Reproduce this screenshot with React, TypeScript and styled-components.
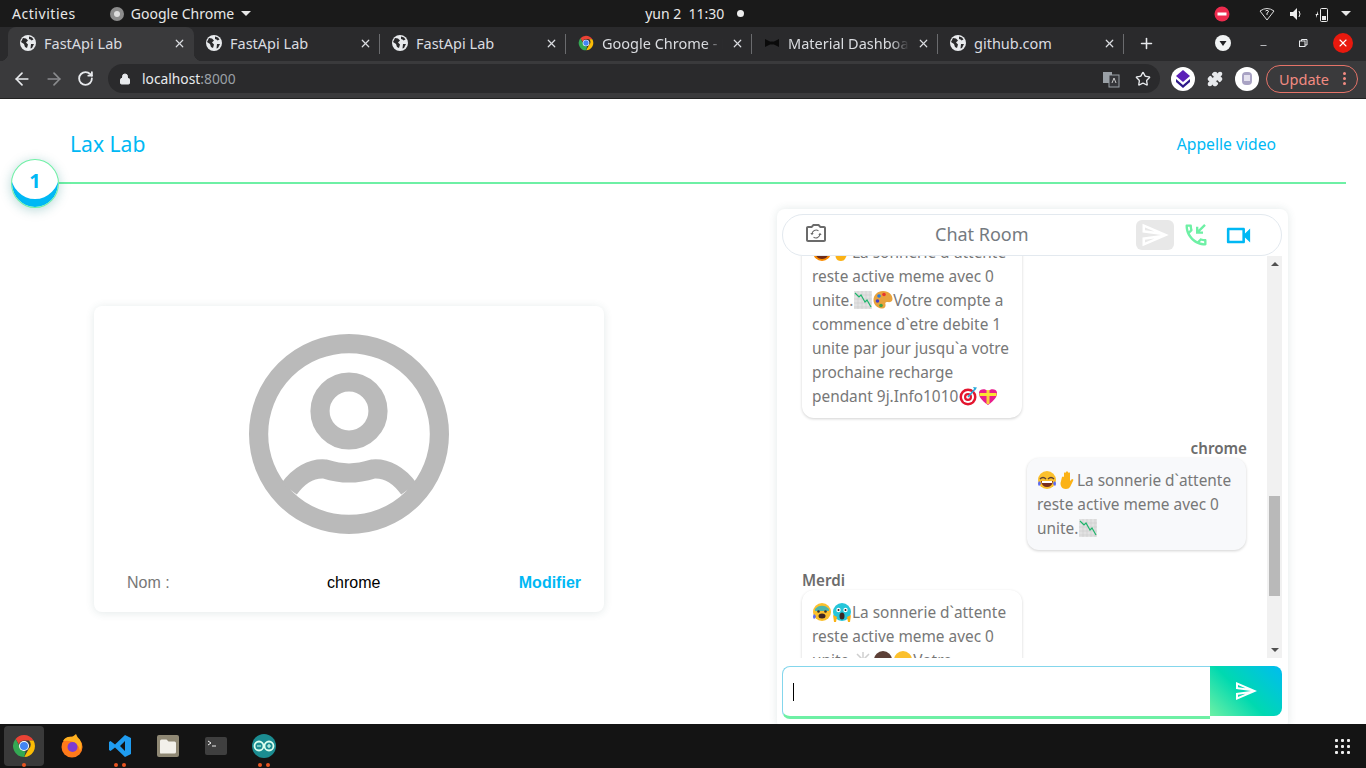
import React from "react";
import styled, { createGlobalStyle } from "styled-components";
import { ArrowLeft, ArrowRight, RotateCw, Lock, Star, Puzzle, X, Plus, Minus } from "lucide-react";

const Global = createGlobalStyle`
  html, body { margin: 0; padding: 0; background: #fff; overflow: hidden; }
  * { box-sizing: border-box; }
`;
const UI = `"Noto Sans", "DejaVu Sans", sans-serif`;
const STRIP = "#2a2a2c";
const RAISED = "#3a3a3c";

const Shell = styled.div`
  width: 1366px; height: 768px; display: flex; flex-direction: column; overflow: hidden; font-family: ${UI};
`;
const TopBar = styled.div`
  height: 27px; background: #1a1a1a; color: #e8e8e8; font-size: 14px; display: flex; align-items: center; flex: none; padding-left: 12px;
`;
const Activities = styled.span`letter-spacing: .55px;`;
const AppMenu = styled.div`display: flex; align-items: center; gap: 7px; margin-left: 34px;`;
const Caret = styled.span`width: 0; height: 0; border-left: 5px solid transparent; border-right: 5px solid transparent; border-top: 5px solid #e8e8e8; display: inline-block;`;
const Clock = styled.div`display: flex; align-items: center; gap: 13px; margin-left: 394px;`;
const ClockDot = styled.span`width: 7px; height: 7px; border-radius: 50%; background: #eee;`;
const Tray = styled.div`margin-left: auto; display: flex; align-items: center; padding-right: 15px; gap: 11px;`;
const TraySpacer = styled.span`width: 7px;`;
const WifiIcon = styled.svg`margin-right: 3px;`;
const TabStrip = styled.div`
  height: 34px; background: ${STRIP}; display: flex; align-items: stretch; padding-left: 8px; flex: none; position: relative;
`;
const Tab = styled.div<{ $active?: boolean; $sep?: boolean }>`
  width: 186px; display: flex; align-items: center; padding: 0 8px 2px 12px; gap: 8px; color: #dadce0; position: relative;
  background: ${p => (p.$active ? RAISED : "transparent")};
  border-radius: 8px 8px 0 0;
  ${p => p.$sep ? `&::after { content: ""; position: absolute; right: 0; top: 7px; height: 20px; width: 1px; background: #6a6b6e; }` : ""}
  ${p => p.$active ? `
    &::before { content: ""; position: absolute; left: -8px; bottom: 0; width: 8px; height: 8px; background: radial-gradient(circle at 0 0, transparent 8px, ${RAISED} 8.5px); }
    &::after { content: ""; position: absolute; right: -8px; bottom: 0; width: 8px; height: 8px; background: radial-gradient(circle at 100% 0, transparent 8px, ${RAISED} 8.5px); }
  ` : ""}
`;
const TabTitle = styled.span<{ $fade?: boolean }>`
  flex: 1; white-space: nowrap; overflow: hidden; font-size: 14.5px;
  ${p => p.$fade ? "-webkit-mask-image: linear-gradient(90deg,#000 85%,transparent 100%); mask-image: linear-gradient(90deg,#000 85%,transparent 100%);" : ""}
`;
const TabGlyph = styled.span`width: 16px; height: 16px; display: flex; align-items: center; justify-content: center; flex: none;`;
const NewTab = styled.div`width: 44px; padding-bottom: 2px; display: flex; align-items: center; justify-content: center; color: #e8eaed;`;
const WindowControls = styled.div`margin-left: auto; display: flex; align-items: center; padding: 0 3px 2px 0; color: #e8eaed;`;
const WinBtn = styled.div`width: 40px; display: flex; justify-content: center; align-items: center;`;
const CloseDot = styled.div`width: 20px; height: 20px; border-radius: 50%; background: #e8190e; color: #fff; display: flex; align-items: center; justify-content: center;`;
const Toolbar = styled.div`
  height: 38px; background: ${RAISED}; display: flex; align-items: center; flex: none; padding: 0 0 2px 12px; color: #e8eaed; border-bottom: 1px solid #222;
`;
const NavBtn = styled.div<{ $dim?: boolean }>`width: 32px; display: flex; color: ${p => (p.$dim ? "#8a8b8e" : "#e8eaed")};`;
const ReloadBtn = styled(NavBtn)`padding-left: 1px;`;
const Omnibox = styled.div`
  width: 1052px; height: 29px; border-radius: 15px; background: ${STRIP}; display: flex; align-items: center; padding: 0 8px 0 11px; font-size: 13.8px; color: #e8eaed;
`;
const Host = styled.span`margin-left: 11px;`;
const Port = styled.span`color: #9aa0a6;`;
const OmniRight = styled.div`margin-left: auto; display: flex; align-items: center; gap: 15px; padding-right: 1px;`;
const ExtRow = styled.div`display: flex; align-items: center; gap: 8px; margin-left: 11px;`;
const ExtCircle = styled.div`width: 24px; height: 24px; border-radius: 50%; background: #fff; display: flex; align-items: center; justify-content: center;`;
const ExtPlain = styled.div`width: 24px; height: 24px; display: flex; align-items: center; justify-content: center; color: #e8eaed;`;
const UpdatePill = styled.div`
  width: 92px; height: 28px; margin-left: 7px; border: 1px solid #e57368; border-radius: 14px; color: #f28b82; font-size: 14.5px; display: flex; align-items: center; padding-left: 12px; gap: 14px;
`;
const Dots = styled.span`display: flex; flex-direction: column; gap: 2px;`;
const DotOne = styled.i`width: 3px; height: 3px; border-radius: 50%; background: #f28b82; display: block;`;

const Page = styled.main`flex: 1; min-height: 0; background: #fff; overflow: hidden; color: #777;`;
const Header = styled.header`
  height: 61px; display: flex; justify-content: space-between; align-items: flex-end; padding: 0 90px 1px 70px; color: #00b8f4;
`;
const Brand = styled.div`font-size: 21.1px; line-height: 30px;`;
const HeaderLink = styled.a`font-size: 15.7px; line-height: 24px; padding-bottom: 3px;`;
const Timeline = styled.div`height: 48px; display: flex; align-items: center; padding: 0 20px 0 11px;`;
const StepCircle = styled.div`
  width: 48px; height: 49px; border-radius: 50%; flex: none; background: #fff; border: 1px solid #6ef0a5; color: #00b8f4;
  font-weight: 700; font-size: 20px; padding-bottom: 7px; display: flex; align-items: center; justify-content: center;
  box-shadow: inset 0 -9px 0 -1px #00b8f4, 0 2px 12px rgba(0,120,120,.28);
  position: relative; z-index: 1; margin-top: -1px;
`;
const StepLine = styled.div`flex: 1; height: 2px; background: #6ef0a5; margin-top: -2px;`;
const Content = styled.div`display: flex; justify-content: space-between; align-items: flex-start; padding: 0 78px 0 94px;`;
const ProfileCard = styled.section`
  width: 510px; height: 306px; margin-top: 98px; background: #fff; border-radius: 8px; box-shadow: 0 1px 8px rgba(60,100,100,.14);
  padding-top: 28px; display: flex; flex-direction: column; align-items: center;
`;
const AvatarSvg = styled.svg`margin: -20px 0;`;
const NameRow = styled.div`
  align-self: stretch; margin-top: 37px; padding: 0 23px 0 33px; display: flex; align-items: center; font-family: "Liberation Sans", Arial, sans-serif; font-size: 16px; line-height: 24px;
`;
const NameLabel = styled.span`color: #777; width: 200px;`;
const NameValue = styled.span`color: #000;`;
const NameEdit = styled.a`margin-left: auto; color: #00b8f4; font-weight: 700;`;

const ChatCard = styled.section`
  width: 511px; height: 520px; margin-top: 1px; background: #fff; border-radius: 8px; box-shadow: 0 0 8px rgba(60,100,100,.14);
  padding: 5px 6px 5px 5px; display: flex; flex-direction: column;
`;
const ChatHead = styled.div`
  height: 42px; flex: none; border: 1px solid #e3e9ef; border-radius: 21px; display: flex; align-items: center; padding: 0 27px 0 21px; background: #fff; z-index: 1;
`;
const CamBtn = styled.div`color: #6b6b6b; display: flex; margin-top: -5px;`;
const ChatTitle = styled.div`margin-left: 107px; font-size: 18px; color: #747a80; padding-bottom: 2px;`;
const ChatActions = styled.div`margin-left: auto; display: flex; align-items: center;`;
const GreySend = styled.div`width: 38px; height: 30px; border-radius: 6px; background: #e8e8e8; display: flex; align-items: center; justify-content: center;`;
const IconSlot = styled.div<{ $c: string; $gap: number }>`color: ${p => p.$c}; display: flex; justify-content: center; margin-left: ${p => p.$gap}px;`;
const ScrollWrap = styled.div`height: 402px; flex: none; display: flex;`;
const Messages = styled.div`flex: 1; overflow: hidden; padding: 0 21px 0 20px;`;
const Track = styled.div`margin-top: -26px; display: flex; flex-direction: column;`;
const Group = styled.div<{ $me?: boolean }>`display: flex; flex-direction: column; align-items: ${p => (p.$me ? "flex-end" : "flex-start")}; margin-bottom: 16px;`;
const Sender = styled.div<{ $me?: boolean }>`font-size: 15.2px; line-height: 20px; padding-top: 4px; font-weight: 600; color: #6c6c6c; margin-right: ${p => (p.$me ? "-1px" : "0")};`;
const Bubble = styled.div<{ $me?: boolean }>`
  width: ${p => (p.$me ? "219px" : "220px")}; padding: 11px 10px 9px; font-size: 15.4px; line-height: 24px; white-space: nowrap; color: #777; border-radius: 12px;
  background: ${p => (p.$me ? "#f8f9fb" : "#fff")};
  box-shadow: 0 1px 3px rgba(0,0,0,.18);
`;
const EmojiBox = styled.svg`width: 20px; height: 20px; vertical-align: -4px;`;
const Scrollbar = styled.div`width: 15px; flex: none; background: #f1f1f1; display: flex; flex-direction: column; align-items: center; position: relative;`;
const ArrowUp = styled.span`width: 0; height: 0; border-left: 4px solid transparent; border-right: 4px solid transparent; border-bottom: 4px solid #505050; margin-top: 6px;`;
const ArrowDown = styled.span`width: 0; height: 0; border-left: 4px solid transparent; border-right: 4px solid transparent; border-top: 4px solid #505050; margin-top: auto; margin-bottom: 6px;`;
const Thumb = styled.div`position: absolute; top: 240px; left: 2px; width: 11px; height: 100px; background: #b9b9b9;`;
const Composer = styled.div`display: flex; margin-top: 8px; height: 53px; align-items: flex-start; flex: none;`;
const InputBox = styled.div`
  flex: 1; height: 53px; border: 1px solid #84d6ec; border-bottom: 3px solid #6ef0a5; border-right: 0; border-radius: 8px 0 0 8px; display: flex; align-items: center; padding-left: 10px;
`;
const Caretline = styled.div`width: 1px; height: 18px; background: #000;`;
const SendBtn = styled.div`
  width: 72px; height: 50px; border-radius: 0 8px 8px 0; background: linear-gradient(45deg, #6ef0a5 0%, #00d9b0 45%, #00bcf0 100%); display: flex; align-items: center; justify-content: center;
`;
const Dock = styled.footer`height: 44px; flex: none; background: #141414; display: flex; align-items: center; padding-left: 4px;`;
const DockItem = styled.div<{ $active?: boolean }>`
  width: 40px; height: 40px; margin-right: 8px; border-radius: 4px; background: ${p => (p.$active ? "#3a3a3a" : "transparent")}; display: flex; align-items: center; justify-content: center; position: relative;
`;
const RunDots = styled.div`position: absolute; bottom: -1px; left: 0; right: 0; display: flex; justify-content: center; gap: 4px;`;
const RunDot = styled.i`width: 4px; height: 4px; border-radius: 50%; background: #e95420; display: block;`;
const AppGrid = styled.div`margin-left: auto; margin-right: 16px; display: grid; grid-template-columns: repeat(3, 3px); gap: 3px;`;
const GridDot = styled.i`width: 3px; height: 3px; background: #eee; display: block; border-radius: 1px;`;
const MinusNudge = styled.span`display: flex; margin-top: 5px;`;

const SEND = "M4.01 6.03l7.51 3.22-7.52-1 .01-2.22m7.5 8.72L4 17.97v-2.22l7.51-1M2.01 3L2 10l15 2-15 2 .01 7L23 12 2.01 3z";
const SendIcon = ({ s, c }: { s: number; c: string }) => <svg width={s} height={s} viewBox="0 0 24 24" fill={c}><path d={SEND} /></svg>;
const ChromeLogo = ({ s }: { s: number }) => (
  <svg width={s} height={s} viewBox="0 0 24 24">
    <path d="M12 1a11 11 0 0 1 9.500 5.500H12a5.500 5.500 0 0 0-5.200 3.700L3.600 5A11 11 0 0 1 12 1z" fill="#ea4335" />
    <path d="M21.500 6.500A11 11 0 0 1 12.200 23l4.600-8.200a5.500 5.500 0 0 0 .1-8.300z" fill="#fbbc05" />
    <path d="M12.200 23A11 11 0 0 1 3.600 5l4.700 8.600a5.500 5.500 0 0 0 5.300 3.700z" fill="#34a853" />
    <circle cx="12" cy="12" r="5" fill="#fff" /><circle cx="12" cy="12" r="4" fill="#4285f4" />
  </svg>
);
const GlobeFav = () => (
  <svg width="16" height="16" viewBox="0 0 16 16">
    <circle cx="8" cy="8" r="8" fill="#e8eaed" />
    <path d="M3 3l3 .5 2 2-2 2 2 2-1 3.500-2-1-1-3-3-2zM9 1.500l3 1 1.500 2-2 1-1-1-1.500-.5zM11 9l3 0-2 4-1.500 .5z" fill={STRIP} />
  </svg>
);
const Bow = () => <svg width="16" height="16" viewBox="0 0 16 16" fill="#0a0a0a"><path d="M1 4l6 3v2l-6 3zM15 4l-6 3v2l6 3z" /><rect x="6.500" y="6.500" width="3" height="3" /></svg>;

const Emoji = ({ k }: { k: string }) => {
  const body: Record<string, React.ReactNode> = {
    laugh: <><circle cx="10" cy="10" r="9" fill="#fbc02d" /><path d="M3 9q3-3 6 0M11 9q3-3 6 0" stroke="#5d4037" fill="none" strokeWidth="1.400" /><path d="M4 11h12q-1 6-6 6t-6-6z" fill="#7a2e1d" /><rect x="5" y="11" width="10" height="2" fill="#fff" /><path d="M2 11q-2 3 0 5 2-1 2-3zM18 11q2 3 0 5-2-1-2-3z" fill="#5c6bf0" /></>,
    hand: <path d="M5 7q1-1 2 0v3-7q1-1.500 2 0v6-7q1-1.500 2 0v7-6q1-1.500 2 0v8l2-2q2 0 1 2l-3 6q-1 2-4 2-4 0-5-3-.5-1-.5-3z" fill="#fbb216" />,
    chart: <><rect x="1" y="1" width="18" height="18" fill="#e2e2e2" /><path d="M1 5h18M1 9h18M1 13h18M1 17h18M5 1v18M9 1v18M13 1v18M17 1v18" stroke="#cfcfcf" strokeWidth=".6" /><path d="M2 3l4 4 2-2 4 7 2-2 4 7" stroke="#1db56b" fill="none" strokeWidth="1.200" /></>,
    palette: <><path d="M10 1c6 0 9.500 4 9.500 8 0 3-3 3.500-5 3-2-.3-2.500 1-2 2.500.5 2-1 4.500-4 4C4 18 .5 14.500 .5 10 .5 5 4.500 1 10 1z" fill="#e8a33d" /><circle cx="6" cy="6" r="1.800" fill="#2b7de0" /><circle cx="11" cy="4.500" r="1.800" fill="#e8352e" /><circle cx="4.500" cy="11" r="1.800" fill="#4a3fbf" /><circle cx="8" cy="15.500" r="1.800" fill="#43a047" /></>,
    target: <><circle cx="10" cy="11" r="8.500" fill="#e3152f" /><circle cx="10" cy="11" r="6" fill="#fff" /><circle cx="10" cy="11" r="4" fill="#e3152f" /><circle cx="10" cy="11" r="1.800" fill="#fff" /><path d="M10 11l7-8" stroke="#29a8d8" strokeWidth="1.500" /><path d="M15 1l4 .500-2 3z" fill="#29a8d8" /></>,
    gift: <><path d="M10 19C3 14 .5 10 1 6.500 1.500 3.500 6 2 10 5c4-3 8.500-1.500 9 1.500C19.500 10 17 14 10 19z" fill="#e91e8c" /><path d="M1.500 7h17v3h-17z" fill="#fbe233" /><path d="M8.500 4h3v14h-3z" fill="#fbe233" opacity=".9" /></>,
    fear: <><circle cx="10" cy="10" r="9" fill="#fbc02d" /><path d="M3 7a9 9 0 0 1 14 0v2H3z" fill="#4db6ac" /><circle cx="6.500" cy="9.500" r="1.300" fill="#333" /><circle cx="13.500" cy="9.500" r="1.300" fill="#333" /><ellipse cx="10" cy="14" rx="3.500" ry="2.500" fill="#3e2723" /><path d="M2 12q-2 3 0 5 2-1 2-3z" fill="#5c6bf0" /></>,
    scream: <><circle cx="10" cy="10" r="9" fill="#26c6da" /><circle cx="6.500" cy="8" r="2.200" fill="#fff" /><circle cx="13.500" cy="8" r="2.200" fill="#fff" /><circle cx="6.500" cy="8" r="1" fill="#222" /><circle cx="13.500" cy="8" r="1" fill="#222" /><ellipse cx="10" cy="14" rx="2.500" ry="3.500" fill="#3e2723" /><path d="M1 13l4 2-1 5H2zM19 13l-4 2 1 5h2z" fill="#fbb216" /></>,
    angry: <><circle cx="10" cy="10" r="9" fill="#fb8c00" /><path d="M3 10h14q-1 7-7 7t-7-7z" fill="#6d2a1a" /></>,
    sparkle: <path d="M10 2v16M2 10h16M4 4l12 12M16 4L4 16" stroke="#cfcfcf" strokeWidth="1.500" />,
    head: <><circle cx="10" cy="10" r="9" fill="#5d4037" /></>,
    face: <><circle cx="10" cy="10" r="9" fill="#fbc02d" /></>,
  };
  return <EmojiBox viewBox="0 0 20 20">{body[k]}</EmojiBox>;
};

const tabs = [
  { t: "FastApi Lab", i: "g", a: true },
  { t: "FastApi Lab", i: "g", sep: true },
  { t: "FastApi Lab", i: "g", sep: true },
  { t: "Google Chrome - Démarrer", i: "c", sep: true, f: true },
  { t: "Material Dashboard", i: "b", sep: true, f: true },
  { t: "github.com", i: "g", sep: true },
];

const Avatar = () => (
  <AvatarSvg width="240" height="240" viewBox="0 0 24 24" fill="none" stroke="#bababa">
    <circle cx="12" cy="12" r="9.040" strokeWidth="1.920" />
    <circle cx="12" cy="9.700" r="2.900" strokeWidth="1.920" />
    <path d="M6 17.500C7 16.100 8.300 15.400 9.600 15.500 10.400 15.750 11.200 15.900 12 15.900 12.800 15.900 13.600 15.750 14.400 15.500 15.700 15.400 17 16.100 18 17.500" strokeWidth="1.920" />
  </AvatarSvg>
);

export default function App() {
  return (
    <Shell>
      <Global />
      <TopBar>
        <Activities>Activities</Activities>
        <AppMenu>
          <svg width="14" height="14" viewBox="0 0 14 14"><circle cx="7" cy="7" r="7" fill="#8c8c8c" /><circle cx="7" cy="7" r="3" fill="#ddd" /></svg>
          <span>Google Chrome</span><Caret />
        </AppMenu>
        <Clock><span>yun 2&nbsp;&nbsp;11:30</span><ClockDot /></Clock>
        <Tray>
          <svg width="16" height="16" viewBox="0 0 16 16"><circle cx="8" cy="8" r="7.500" fill="#ed2b4e" /><rect x="3.500" y="6.500" width="9" height="3" fill="#fff" /></svg>
          <TraySpacer />
          <WifiIcon width="16" height="14" viewBox="0 0 16 14" fill="none" stroke="#ddd"><path d="M1 4q7-5 14 0L8 13z" /><path d="M6.500 4q1.500-1.500 3 0 0 1.500-1.500 2v2" /></WifiIcon>
          <svg width="14" height="14" viewBox="0 0 14 14" fill="#eee"><path d="M1 5h3l4-4v12l-4-4H1z" /><path d="M10 4q2 3 0 6" stroke="#eee" fill="none" /></svg>
          <svg width="16" height="16" viewBox="0 0 16 16" fill="none" stroke="#eee"><rect x="6.500" y="2.500" width="7" height="13" rx="1" /><rect x="8" y="10" width="4" height="4" fill="#eee" stroke="none" /><path d="M3 5v3H1.500L3 12V9h1.500z" fill="#eee" stroke="none" /></svg>
          <Caret />
        </Tray>
      </TopBar>
      <TabStrip>
        {tabs.map((t, i) => (
          <Tab key={i} $active={t.a} $sep={t.sep}>
            <TabGlyph>{t.i === "g" ? <GlobeFav /> : t.i === "c" ? <ChromeLogo s={16} /> : <Bow />}</TabGlyph>
            <TabTitle $fade={t.f}>{t.t}</TabTitle>
            <X size={13} strokeWidth={2.2} />
          </Tab>
        ))}
        <NewTab><Plus size={17} strokeWidth={2.2} /></NewTab>
        <WindowControls>
          <WinBtn><svg width="16" height="16" viewBox="0 0 16 16"><circle cx="8" cy="8" r="8" fill="#f1f3f4" /><path d="M4.500 6h7L8 11z" fill="#202124" /></svg></WinBtn>
          <WinBtn><MinusNudge><Minus size={9} strokeWidth={2} /></MinusNudge></WinBtn>
          <WinBtn><svg width="10" height="10" viewBox="0 0 10 10" fill="none" stroke="#e8eaed"><rect x="1.500" y="3" width="5.500" height="5.500" /><path d="M3.500 3V1.500H9V7H7" /></svg></WinBtn>
          <WinBtn><CloseDot><X size={12} strokeWidth={2.2} /></CloseDot></WinBtn>
        </WindowControls>
      </TabStrip>
      <Toolbar>
        <NavBtn><ArrowLeft size={20} /></NavBtn>
        <NavBtn $dim><ArrowRight size={20} /></NavBtn>
        <ReloadBtn><RotateCw size={17} strokeWidth={2.6} /></ReloadBtn>
        <Omnibox>
          <Lock size={12} fill="#e8eaed" />
          <Host>localhost<Port>:8000</Port></Host>
          <OmniRight>
            <svg width="18" height="18" viewBox="0 0 18 18"><rect x="1" y="2" width="9" height="11" fill="#9aa0a6" /><rect x="7" y="5" width="10" height="12" fill="#35363a" stroke="#9aa0a6" /><path d="M10 13l2-5 2 5" stroke="#ccc" fill="none" /></svg>
            <Star size={16} />
          </OmniRight>
        </Omnibox>
        <ExtRow>
          <ExtCircle><svg width="16" height="18" viewBox="0 0 16 18"><path d="M8 0l7 6-7 6-7-6z" fill="#5b1fb8" /><path d="M1 9l7 6 7-6v3l-7 6-7-6z" fill="#2e1a8a" /></svg></ExtCircle>
          <ExtPlain><Puzzle size={16} fill="#e8eaed" /></ExtPlain>
          <ExtCircle><svg width="14" height="18" viewBox="0 0 14 18"><rect x="2" y="2" width="10" height="13" rx="4" fill="#a9a3c4" /><rect x="4" y="5" width="6" height="6" fill="#e4e1ee" /></svg></ExtCircle>
        </ExtRow>
        <UpdatePill>Update<Dots><DotOne /><DotOne /><DotOne /></Dots></UpdatePill>
      </Toolbar>
      <Page>
        <Header><Brand>Lax Lab</Brand><HeaderLink>Appelle video</HeaderLink></Header>
        <Timeline><StepCircle>1</StepCircle><StepLine /></Timeline>
        <Content>
          <ProfileCard>
            <Avatar />
            <NameRow>
              <NameLabel>Nom :</NameLabel><NameValue>chrome</NameValue><NameEdit>Modifier</NameEdit>
            </NameRow>
          </ProfileCard>
          <ChatCard>
            <ChatHead>
              <CamBtn>
                <svg width="24" height="24" viewBox="0 0 24 24" fill="currentColor">
                  <path d="M20 5h-3.170L15 3H9L7.170 5H4C2.900 5 2 5.900 2 7v12c0 1.100.9 2 2 2h16c1.100 0 2-.9 2-2V7c0-1.100-.9-2-2-2zm0 14H4V7h4.050l1.830-2h4.240l1.830 2H20v12z" />
                  <path d="M8 13a4 4 0 0 1 6.500-3.100M16 13a4 4 0 0 1-6.500 3.100" fill="none" stroke="currentColor" strokeWidth="1.100" />
                  <path d="M6.300 12h3.400L8 14.200zM17.700 14h-3.400l1.700-2.200z" />
                </svg>
              </CamBtn>
              <ChatTitle>Chat Room</ChatTitle>
              <ChatActions>
                <GreySend><SendIcon s={30} c="#fff" /></GreySend>
                <IconSlot $c="#6ef0a5" $gap={8}>
                  <svg width="28" height="28" viewBox="0 0 24 24" fill="currentColor"><path d="M20 15.500c-1.250 0-2.450-.2-3.570-.57-.1-.03-.21-.05-.31-.05-.26 0-.51.1-.71.29l-2.200 2.200c-2.830-1.450-5.150-3.760-6.590-6.590l2.200-2.210c.28-.26.36-.65.25-1C8.700 6.450 8.500 5.250 8.500 4c0-.55-.45-1-1-1H4c-.55 0-1 .45-1 1 0 9.390 7.610 17 17 17 .55 0 1-.45 1-1v-3.500c0-.55-.45-1-1-1zM5.030 5h1.500c.07.88.22 1.750.45 2.580l-1.200 1.210c-.4-1.210-.66-2.470-.75-3.790zM19 18.970c-1.320-.09-2.600-.35-3.800-.76l1.200-1.200c.85.24 1.720.39 2.600.45v1.510zM18 9h-2.590l5.020-5.020-1.410-1.410L14 7.590V5h-2v6h6z" /></svg>
                </IconSlot>
                <IconSlot $c="#00b8f4" $gap={13}>
                  <svg width="31" height="31" viewBox="0 0 24 24" fill="currentColor"><path d="M15 8v8H5V8h10m1-2H4c-.55 0-1 .45-1 1v10c0 .55.45 1 1 1h12c.55 0 1-.45 1-1v-3.500l4 4v-11l-4 4V7c0-.55-.45-1-1-1z" /></svg>
                </IconSlot>
              </ChatActions>
            </ChatHead>
            <ScrollWrap>
              <Messages>
                <Track>
                  <Group>
                    <Bubble>
                      <Emoji k="angry" /><Emoji k="hand" />La sonnerie d`attente<br />
                      reste active meme avec 0<br />
                      unite.<Emoji k="chart" /><Emoji k="palette" />Votre compte a<br />
                      commence d`etre debite 1<br />
                      unite par jour jusqu`a votre<br />
                      prochaine recharge<br />
                      pendant 9j.Info1010<Emoji k="target" /><Emoji k="gift" />
                    </Bubble>
                  </Group>
                  <Group $me>
                    <Sender $me>chrome</Sender>
                    <Bubble $me>
                      <Emoji k="laugh" /><Emoji k="hand" />La sonnerie d`attente<br />
                      reste active meme avec 0<br />
                      unite.<Emoji k="chart" />
                    </Bubble>
                  </Group>
                  <Group>
                    <Sender>Merdi</Sender>
                    <Bubble>
                      <Emoji k="fear" /><Emoji k="scream" />La sonnerie d`attente<br />
                      reste active meme avec 0<br />
                      unite.<Emoji k="sparkle" /><Emoji k="head" /><Emoji k="face" />Votre
                    </Bubble>
                  </Group>
                </Track>
              </Messages>
              <Scrollbar><ArrowUp /><Thumb /><ArrowDown /></Scrollbar>
            </ScrollWrap>
            <Composer>
              <InputBox><Caretline /></InputBox>
              <SendBtn><SendIcon s={24} c="#fff" /></SendBtn>
            </Composer>
          </ChatCard>
        </Content>
      </Page>
      <Dock>
        <DockItem $active><ChromeLogo s={24} /><RunDots><RunDot /></RunDots></DockItem>
        <DockItem><svg width="24" height="24" viewBox="0 0 24 24"><circle cx="12" cy="13" r="10.500" fill="#ff7a1a" /><path d="M3 7q3-5 9-4 3-2 4-3 1 3 4 6 3 6 0 11-2-12-17-10z" fill="#ffb01f" /><circle cx="12.500" cy="13" r="5" fill="#7c3bd1" /></svg></DockItem>
        <DockItem><svg width="24" height="24" viewBox="0 0 24 24"><path d="M17 1l6 3v16l-6 3-10-9.500L2.500 17 1 16v-8l1.500-1L7 10.500zm0 6l-5 5 5 5z" fill="#1f9cf0" /></svg><RunDots><RunDot /><RunDot /></RunDots></DockItem>
        <DockItem><svg width="24" height="24" viewBox="0 0 24 24"><rect x="1" y="1" width="22" height="22" rx="2" fill="#8f8874" /><path d="M4 7q0-1.500 1.500-1.500h5l2 2h6q1.500 0 1.500 1.500v9q0 1.500-1.500 1.500h-13Q4 20 4 18.500z" fill="#f2f0ea" /></svg></DockItem>
        <DockItem><svg width="24" height="20" viewBox="0 0 24 20"><rect x="1" y="1" width="22" height="18" rx="2" fill="#3f3f3f" /><path d="M4 5l3 2-3 2M8 10h4" stroke="#eee" fill="none" strokeWidth="1" /></svg></DockItem>
        <DockItem><svg width="24" height="24" viewBox="0 0 24 24"><circle cx="12" cy="12" r="12" fill="#1b8c91" /><circle cx="7" cy="12" r="4.500" fill="none" stroke="#dfe" strokeWidth="1.800" /><circle cx="17" cy="12" r="4.500" fill="none" stroke="#dfe" strokeWidth="1.800" /><path d="M5 12h4M15 12h4M17 10v4" stroke="#dfe" strokeWidth="1.200" /></svg><RunDots><RunDot /><RunDot /></RunDots></DockItem>
        <AppGrid>{Array.from({ length: 9 }).map((_, i) => <GridDot key={i} />)}</AppGrid>
      </Dock>
    </Shell>
  );
}
